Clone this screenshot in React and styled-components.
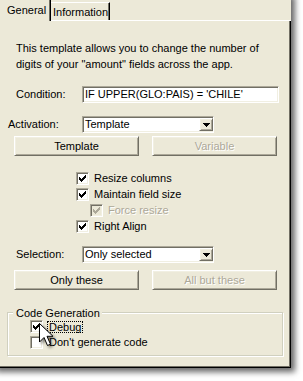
import React from 'react';
import styled, { createGlobalStyle, css } from 'styled-components';

const PANEL = '#ECE9D8';
const DISABLED = '#ACA899';

const GlobalStyle = createGlobalStyle`
  html, body { margin: 0; padding: 0; background: #fff; }
  body {
    font-family: "Liberation Sans", Arial, sans-serif;
    font-size: 11px;
    color: #000;
  }
`;

const Page = styled.div`
  position: relative;
  width: 303px;
  height: 381px;
  overflow: hidden;
  background: #fff;
`;

const Window = styled.div`
  margin: -8px 0 0 -8px;
  width: 299px;
  height: 376px;
  background: ${PANEL};
  box-shadow: 4px 4px 6px rgba(0, 0, 0, 0.6);
  display: flex;
  flex-direction: column;
  box-sizing: border-box;
`;

const TabStrip = styled.div`
  display: flex;
  align-items: flex-end;
  height: 29px;
  padding: 8px 0 0 8px;
  box-sizing: border-box;
`;

const SelectedTab = styled.div`
  width: 51px;
  height: 21px;
  box-sizing: border-box;
  padding-left: 7px;
  line-height: 20px;
  border-right: 1px solid #000;
  box-shadow: inset -1px 0 0 #716f64;
  background: ${PANEL};
`;

const TabRest = styled.div`
  flex: 1;
  display: flex;
  align-items: flex-end;
  height: 21px;
  box-sizing: border-box;
  border-bottom: 1px solid #fff;
`;

const Tab = styled.div`
  width: 59px;
  height: 18px;
  box-sizing: border-box;
  padding: 1px 0 0 2px;
  line-height: 16px;
  border-top: 1px solid #fff;
  border-right: 1px solid #000;
  box-shadow: inset -1px 0 0 #716f64;
`;

const TabBody = styled.div`
  flex: 1;
  display: flex;
  flex-direction: column;
  align-items: flex-start;
  padding-left: 16px;
  box-sizing: border-box;
  border-right: 1px solid #000;
  border-bottom: 1px solid #000;
  box-shadow: inset -1px -1px 0 #716f64;
`;

const Description = styled.p`
  margin: 19px 0 0 8px;
  line-height: 16px;
`;

const FieldRow = styled.div`
  display: grid;
  grid-template-columns: 74px auto;
  align-items: center;
  margin-top: ${(p) => p.$top}px;
`;

const Label = styled.span`
  padding-left: ${(p) => p.$indent || 0}px;
  line-height: 13px;
`;

const sunken = css`
  border: 1px solid;
  border-color: ${DISABLED} #fff #fff ${DISABLED};
  box-shadow: inset 1px 1px 0 #716f64, inset -1px -1px 0 #f1efe2;
`;

const raised = css`
  border: 1px solid;
  border-color: #fff #716f64 #716f64 #fff;
  box-shadow: inset 1px 1px 0 #f1efe2, inset -1px -1px 0 ${DISABLED};
`;

const TextField = styled.div`
  ${sunken};
  width: 197px;
  height: 17px;
  box-sizing: border-box;
  background: #fff;
  padding-left: 2px;
  line-height: 15px;
  white-space: nowrap;
`;

const Select = styled.div`
  ${sunken};
  width: 132px;
  height: 17px;
  box-sizing: border-box;
  background: #fff;
  display: flex;
  align-items: center;
  padding-left: 2px;
  line-height: 15px;
`;

const DropButton = styled.div`
  ${raised};
  margin-left: auto;
  width: 14px;
  height: 13px;
  box-sizing: border-box;
  background: ${PANEL};
  display: flex;
  align-items: center;
  justify-content: center;
`;

const ButtonRow = styled.div`
  display: flex;
  gap: 13px;
  margin: ${(p) => p.$top}px 0 0 6px;
`;

const Button = styled.div`
  ${raised};
  width: 125px;
  height: 20px;
  box-sizing: border-box;
  background: ${PANEL};
  display: flex;
  align-items: center;
  justify-content: center;
  color: ${(p) => (p.$disabled ? DISABLED : '#000')};
  text-shadow: ${(p) => (p.$disabled ? '1px 1px 0 #fff' : 'none')};
`;

const CheckList = styled.div`
  display: flex;
  flex-direction: column;
  margin: 15px 0 0 68px;
`;

const CheckRow = styled.div`
  display: flex;
  align-items: center;
  height: 15px;
  margin: 0 0 1px ${(p) => p.$indent || 0}px;
`;

const Box = styled.span`
  ${sunken};
  width: 13px;
  height: 13px;
  box-sizing: border-box;
  flex: none;
  background: ${(p) => (p.$disabled ? PANEL : '#fff')};
  display: flex;
  align-items: center;
  justify-content: center;
  margin-right: ${(p) => p.$gap ?? 5}px;
`;

const CheckText = styled.span`
  color: ${(p) => (p.$disabled ? DISABLED : '#000')};
  text-shadow: ${(p) => (p.$disabled ? '1px 1px 0 #fff' : 'none')};
  line-height: 13px;
`;

const FocusText = styled.span`
  border: 1px dotted #000;
  padding: 0 1px;
  line-height: 10px;
  height: 10px;
`;

const GroupBox = styled.div`
  position: relative;
  margin: 22px 0 0 -1px;
  width: 276px;
  height: 44px;
  box-sizing: border-box;
  border: 1px solid #d0d0bf;
  box-shadow: inset 1px 1px 0 #fff, 1px 1px 0 #fff;
  padding: 6px 0 0 22px;
  display: flex;
  flex-direction: column;
`;

const GroupLabel = styled.span`
  position: absolute;
  top: -6px;
  left: 5px;
  padding: 0 2px 0 3px;
  background: ${PANEL};
  line-height: 13px;
`;

const Cursor = styled.svg`
  position: absolute;
  left: 31px;
  top: 10px;
  filter: drop-shadow(2px 2px 1.5px rgba(0, 0, 0, 0.45));
`;

const CheckMark = ({ color = '#000' }) => (
  <svg width="7" height="7" viewBox="0 0 7 7" shapeRendering="crispEdges">
    <path
      fill={color}
      d="M0 2h1v3H0z M1 3h1v3H1z M2 4h1v3H2z M3 3h1v3H3z M4 2h1v3H4z M5 1h1v3H5z M6 0h1v3H6z"
    />
  </svg>
);

const Arrow = () => (
  <svg width="7" height="4" viewBox="0 0 7 4" shapeRendering="crispEdges">
    <path fill="#000" d="M0 0h7v1H0z M1 1h5v1H1z M2 2h3v1H2z M3 3h1v1H3z" />
  </svg>
);

const Check = ({ checked, disabled, indent, children }) => (
  <CheckRow $indent={indent}>
    <Box $disabled={disabled}>{checked && <CheckMark color={disabled ? DISABLED : '#000'} />}</Box>
    <CheckText $disabled={disabled}>{children}</CheckText>
  </CheckRow>
);

export default function App() {
  return (
    <>
      <GlobalStyle />
      <Page>
        <Window>
          <TabStrip>
            <SelectedTab>General</SelectedTab>
            <TabRest>
              <Tab>Information</Tab>
            </TabRest>
          </TabStrip>
          <TabBody>
            <Description>
              This template allows you to change the number of
              <br />
              digits of your "amount" fields across the app.
            </Description>

            <FieldRow $top={14}>
              <Label $indent={8}>Condition:</Label>
              <TextField>IF UPPER(GLO:PAIS) = 'CHILE'</TextField>
            </FieldRow>

            <FieldRow $top={13}>
              <Label>Activation:</Label>
              <Select>
                Template
                <DropButton>
                  <Arrow />
                </DropButton>
              </Select>
            </FieldRow>

            <ButtonRow $top={3}>
              <Button>Template</Button>
              <Button $disabled>Variable</Button>
            </ButtonRow>

            <CheckList>
              <Check checked>Resize columns</Check>
              <Check checked>Maintain field size</Check>
              <Check checked disabled indent={14}>
                Force resize
              </Check>
              <Check checked>Right Align</Check>
            </CheckList>

            <FieldRow $top={11}>
              <Label $indent={8}>Selection:</Label>
              <Select>
                Only selected
                <DropButton>
                  <Arrow />
                </DropButton>
              </Select>
            </FieldRow>

            <ButtonRow $top={7}>
              <Button>Only these</Button>
              <Button $disabled>All but these</Button>
            </ButtonRow>

            <GroupBox>
              <GroupLabel>Code Generation</GroupLabel>
              <CheckRow>
                <Box $gap={4}>
                  <CheckMark />
                </Box>
                <FocusText>Debug</FocusText>
              </CheckRow>
              <CheckRow>
                <Box $gap={6} />
                <CheckText>Don't generate code</CheckText>
              </CheckRow>
              <Cursor width="16" height="24" viewBox="0 0 16 24">
                <path
                  d="M0.5 0.5 L0.5 19 L5 14.5 L8.5 22.5 L11.5 21.2 L8 13.3 L14 13.3 Z"
                  fill="#fff"
                  stroke="#000"
                  strokeWidth="1"
                  strokeLinejoin="miter"
                />
              </Cursor>
            </GroupBox>
          </TabBody>
        </Window>
      </Page>
    </>
  );
}
